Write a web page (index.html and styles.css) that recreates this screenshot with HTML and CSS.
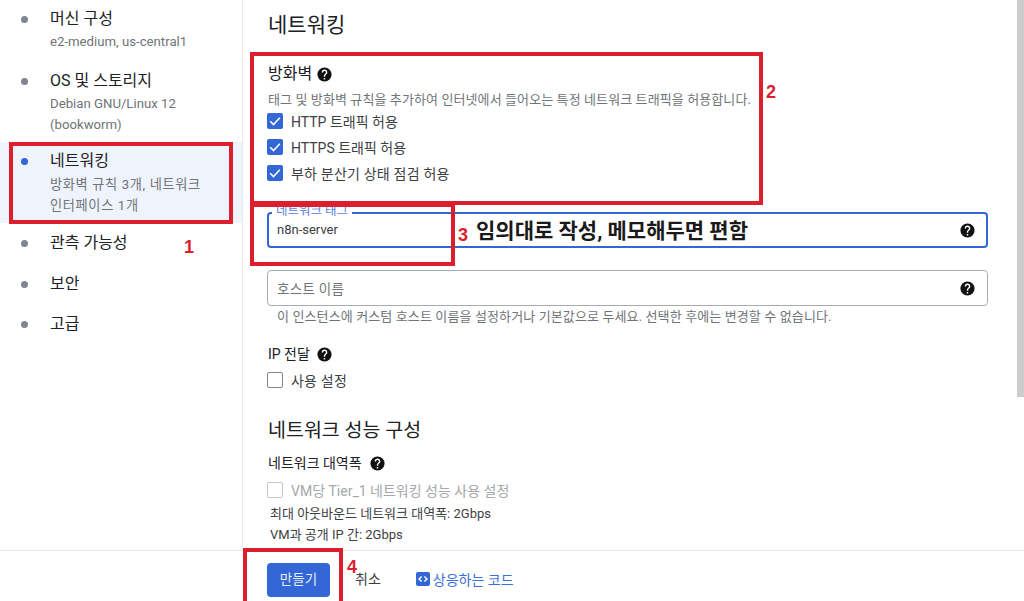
FILE: index.html
```html
<!DOCTYPE html>
<html lang="ko">
<head>
<meta charset="utf-8">
<title>네트워킹</title>
<link rel="stylesheet" href="styles.css">
</head>
<body>
<svg class="defs" width="0" height="0" aria-hidden="true">
  <symbol id="help" viewBox="0 0 24 24"><path fill="#111" d="M12 2a10 10 0 1 0 0 20 10 10 0 0 0 0-20zm1 17h-2v-2h2v2zm2.07-7.75-.9.92C13.45 12.9 13 13.5 13 15h-2v-.5c0-1.1.45-2.1 1.17-2.83l1.24-1.26c.37-.36.59-.86.59-1.41 0-1.1-.9-2-2-2s-2 .9-2 2H8c0-2.21 1.79-4 4-4s4 1.79 4 4c0 .88-.36 1.68-.93 2.25z"/></symbol>
  <symbol id="check" viewBox="0 0 16 16"><rect width="16" height="16" rx="2" fill="#3367d6"/><path d="M3.2 8.2 6.5 11.5 12.8 4.8" fill="none" stroke="#fff" stroke-width="1.6"/></symbol>
</svg>
<div class="page">
  <div class="top">
    <nav class="side">
      <div class="step s-one"><i class="dot"></i><div><div class="st">머신 구성</div><div class="ss">e2-medium, us-central1</div></div></div>
      <div class="step s-two"><i class="dot"></i><div><div class="st">OS 및 스토리지</div><div class="ss">Debian GNU/Linux 12<br>(bookworm)</div></div></div>
      <div class="step s-active"><i class="dot dot-on"></i><div><div class="st">네트워킹</div><div class="ss ss-kr">방화벽 규칙 3개, 네트워크<br>인터페이스 1개</div></div></div>
      <div class="step s-obs"><i class="dot"></i><div class="st">관측 가능성</div></div>
      <div class="step s-plain"><i class="dot"></i><div class="st">보안</div></div>
      <div class="step s-plain"><i class="dot"></i><div class="st">고급</div></div>
    </nav>
    <main class="main">
      <h1 class="h1">네트워킹</h1>
      <div class="label fw"><span>방화벽</span><svg class="help"><use href="#help"/></svg></div>
      <p class="desc">태그 및 방화벽 규칙을 추가하여 인터넷에서 들어오는 특정 네트워크 트래픽을 허용합니다.</p>
      <div class="cb cb-tight"><svg class="box"><use href="#check"/></svg><span>HTTP 트래픽 허용</span></div>
      <div class="cb cb-tight"><svg class="box"><use href="#check"/></svg><span>HTTPS 트래픽 허용</span></div>
      <div class="cb"><svg class="box"><use href="#check"/></svg><span>부하 분산기 상태 점검 허용</span></div>
      <div class="field field-on">
        <span class="float">네트워크 태그</span>
        <span class="val">n8n-server</span>
        <svg class="help"><use href="#help"/></svg>
      </div>
      <div class="field field-host">
        <span class="ph">호스트 이름</span>
        <svg class="help"><use href="#help"/></svg>
      </div>
      <p class="hint">이 인스턴스에 커스텀 호스트 이름을 설정하거나 기본값으로 두세요. 선택한 후에는 변경할 수 없습니다.</p>
      <div class="label ip"><span>IP 전달</span><svg class="help"><use href="#help"/></svg></div>
      <div class="cb cb-ip"><i class="empty"></i><span>사용 설정</span></div>
      <h2 class="h2">네트워크 성능 구성</h2>
      <div class="label bw"><span>네트워크 대역폭</span><svg class="help"><use href="#help"/></svg></div>
      <div class="cb cb-off"><i class="empty"></i><span>VM당 Tier_1 네트워킹 성능 사용 설정</span></div>
      <div class="info info-a">최대 아웃바운드 네트워크 대역폭: 2Gbps</div>
      <div class="info info-b">VM과 공개 IP 간: 2Gbps</div>
    </main>
    <div class="scroll"></div>
  </div>
  <footer class="foot">
    <button class="create">만들기</button>
    <span class="cancel">취소</span>
    <span class="code"><svg class="code-i" viewBox="0 0 14 14"><rect width="14" height="14" rx="2" fill="#3367d6"/><path d="M5.6 4.4 3 7l2.6 2.6M8.4 4.4 11 7 8.4 9.6" fill="none" stroke="#fff" stroke-width="1.4"/></svg>상응하는 코드</span>
  </footer>
  <div class="mark m1"></div>
  <div class="mark m2"></div>
  <div class="mark m3"></div>
  <div class="mark m4"></div>
  <span class="num n1">1</span>
  <span class="num n2">2</span>
  <span class="num n3">3</span>
  <span class="num n4">4</span>
  <span class="note">임의대로 작성, 메모해두면 편함</span>
</div>
</body>
</html>
```
FILE: styles.css
```css
* { box-sizing: border-box; }
html, body { margin: 0; padding: 0; background: #fff; }
body { font-family: Roboto, "Noto Sans CJK KR", sans-serif; color: #202124; overflow: hidden; }
.defs { position: absolute; }
.page { position: relative; width: 1024px; height: 601px; display: flex; flex-direction: column; overflow: hidden; }
.top { display: flex; height: 550px; }
.side { width: 243px; flex: none; border-right: 1px solid #e8eaed; padding-top: 7px; }
.step { display: flex; gap: 22px; padding-left: 21px; }
.dot { width: 7px; height: 7px; border-radius: 50%; background: #80868b; flex: none; margin-top: 9px; }
.dot-on { background: #3367d6; }
.st { font-size: 16px; line-height: 23px; color: #202124; }
.ss { font-size: 13.2px; line-height: 20.5px; color: #6f7478; margin-top: 2px; }
.ss-kr { letter-spacing: .65px; margin-top: 3px; }
.s-one { height: 62px; }
.s-two { height: 73px; }
.s-active { height: 81px; background: #eef3fc; padding-top: 7px; }
.s-obs { height: 49px; padding-top: 8px; }
.s-plain { height: 40px; }
.main { flex: 1; padding: 0 0 0 25px; min-width: 0; }
.h1 { margin: 13px 0 0; font-size: 21px; line-height: 25px; font-weight: 400; color: #202124; }
.label { display: flex; align-items: center; font-size: 16px; line-height: 20px; color: #202124; }
.help { width: 17px; height: 17px; flex: none; }
.fw { margin-top: 26px; gap: 4px; }
.desc { margin: 8px 0 0; font-size: 13px; line-height: 16px; color: #6f7478; white-space: nowrap; letter-spacing: .1px; }
.cb { display: flex; align-items: center; height: 26px; gap: 8px; font-size: 14px; color: #3c4043; letter-spacing: .2px; margin-left: -1px; }
.cb-tight { letter-spacing: 0; }
.box { width: 16px; height: 16px; flex: none; }
.empty { width: 16px; height: 16px; border: 1.5px solid #80868b; border-radius: 2px; flex: none; }
.field { width: 721px; height: 36px; border-radius: 4px; border: 1px solid #a8abae; display: flex; align-items: center; justify-content: space-between; padding: 0 11px 0 9px; position: relative; font-size: 13px; margin-left: -1px; }
.field-on { margin-top: 26px; border: 2px solid #3367d6; padding-left: 8px; padding-right: 10px; }
.field-host { margin-top: 22px; }
.float { position: absolute; left: 3px; top: -9px; background: #fff; padding: 0 4px; font-size: 12.5px; line-height: 12px; color: #5b84dc; }
.val { color: #3c4043; margin-top: -2px; }
.ph { color: #6f7478; font-size: 13.5px; letter-spacing: .3px; }
.hint { margin: 2px 0 0 9px; font-size: 13px; line-height: 18px; color: #6f7478; white-space: nowrap; letter-spacing: .12px; }
.ip { margin-top: 18px; gap: 6px; font-size: 14px; }
.cb-ip { margin-top: 3px; }
.h2 { margin: 26px 0 0; font-size: 19.5px; line-height: 24px; font-weight: 400; color: #202124; }
.bw { margin-top: 10px; gap: 7px; font-size: 14px; }
.cb-off { margin-top: 4px; color: #a4a8ac; letter-spacing: 0; }
.cb-off .empty { border-color: #c4c7ca; }
.info { font-size: 13px; line-height: 20px; color: #3c4043; padding-left: 2px; margin-top: 1px; }
.scroll { width: 7px; flex: none; height: 397px; background: #cdcdcd; }
.foot { height: 51px; border-top: 1px solid #e3e5e8; display: flex; align-items: flex-start; padding: 12px 0 0 267px; font-size: 14px; color: #3c4043; }
.create { width: 63px; height: 34px; border: 0; border-radius: 4px; background: #3367d6; color: #e8eefb; font: inherit; font-size: 13.5px; line-height: 32px; padding: 0 0 2px; }
.cancel { margin-left: 25px; line-height: 32px; }
.code { margin-left: 35px; display: flex; align-items: center; height: 32px; color: #3b6fd8; }
.code-i { width: 14px; height: 14px; margin-right: 3px; }
.mark { position: absolute; border: 4px solid #dd1f2d; }
.m1 { left: 9px; top: 142px; width: 224px; height: 82px; }
.m2 { left: 250px; top: 52px; width: 513px; height: 153px; }
.m3 { left: 250px; top: 203px; width: 205px; height: 63px; }
.m4 { left: 243px; top: 548px; width: 100px; height: 60px; }
.num { position: absolute; color: #dd1f2d; font: 700 18px/20px "Liberation Sans", "Noto Sans CJK KR", sans-serif; }
.n1 { left: 184px; top: 237px; }
.n2 { left: 766px; top: 82px; }
.n3 { left: 458px; top: 225px; }
.n4 { left: 347px; top: 557px; }
.note { position: absolute; left: 476px; top: 219px; font-size: 21px; line-height: 25px; font-weight: 700; color: #1a1a1a; white-space: nowrap; }
```
